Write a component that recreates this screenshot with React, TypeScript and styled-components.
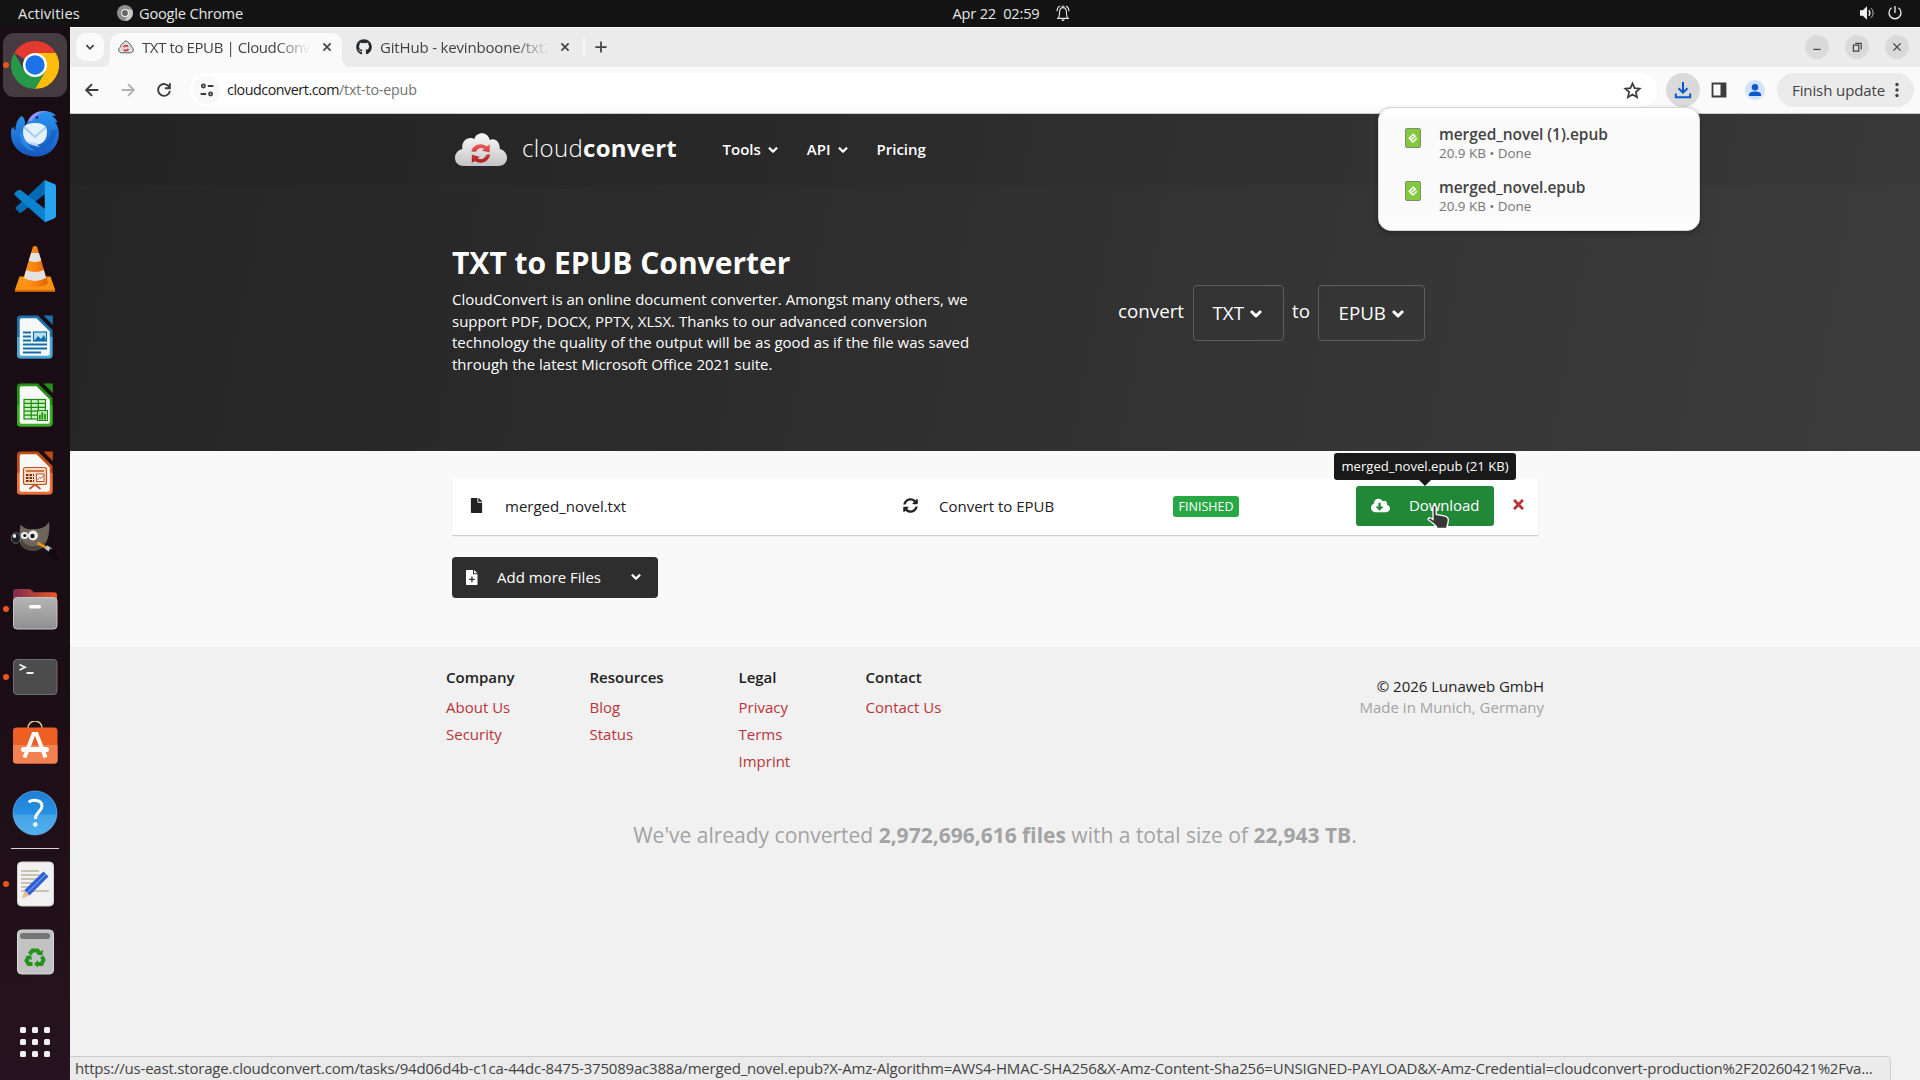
import React from "react";
import styled, { createGlobalStyle } from "styled-components";
import { FaChevronDown, FaCloudDownloadAlt, FaFile, FaGithub, FaSyncAlt, FaTimes } from "react-icons/fa";

const GlobalStyle = createGlobalStyle`
  * { box-sizing: border-box; }
  html, body { margin: 0; padding: 0; overflow: hidden; }
  body { font-family: "Open Sans", "Noto Sans", sans-serif; font-size: 15px; color: #212121; }
  svg { display: block; flex: none; }
`;

/* ---------- desktop ---------- */

const Desktop = styled.div`
  width: 1920px;
  height: 1080px;
  display: grid;
  grid-template: 27px minmax(0, 1fr) / 70px minmax(0, 1fr);
  overflow: hidden;
`;

const TopBar = styled.header`
  grid-column: 1 / 3;
  display: grid;
  grid-template-columns: 1fr auto 1fr;
  align-items: center;
  background: #131313;
  color: #e6e6e6;
  font-size: 14.67px;
  line-height: 25px;
  padding-bottom: 1px;
  white-space: pre;
`;

const TopGroup = styled.div<{ $gap: number; $end?: boolean }>`
  display: flex;
  align-items: center;
  gap: ${(p) => p.$gap}px;
  justify-content: ${(p) => (p.$end ? "flex-end" : "flex-start")};
  padding: 0 ${(p) => (p.$end ? 17 : 0)}px 0 ${(p) => (p.$end ? 0 : 18)}px;
`;

const AppMenu = styled.div`
  display: flex;
  align-items: center;
  gap: 6px;
`;

const Label = styled.span<{ $track?: number }>`
  letter-spacing: ${(p) => p.$track ?? 0}px;
  white-space: pre;
`;

const Clock = styled.div`
  display: flex;
  align-items: center;
  gap: 17px;
  padding-left: 103px;
`;

const Dock = styled.nav`
  display: flex;
  flex-direction: column;
  align-items: center;
  gap: 4px;
  padding-top: 6px;
  background: linear-gradient(165deg, #190c13 0%, #1b0d15 60%, #26131f 100%);
`;

const DockTile = styled.div<{ $active?: boolean }>`
  position: relative;
  width: 64px;
  height: 64px;
  flex: none;
  display: grid;
  place-items: center;
  border-radius: 11px;
  background: ${(p) => (p.$active ? "#453b41" : "transparent")};
`;

const RunningDot = styled.i`
  position: absolute;
  left: 0;
  top: 29px;
  width: 6px;
  height: 6px;
  border-radius: 50%;
  background: #e95420;
`;

const DockDivider = styled.hr`
  width: 48px;
  height: 1px;
  margin: -1px 0 -1px;
  border: 0;
  flex: none;
  background: #d8d5d7;
`;

const GridButton = styled.div`
  display: grid;
  grid-template-columns: repeat(3, 6px);
  gap: 6px;
  margin-top: 39px;
`;

const GridDot = styled.i`
  height: 6px;
  border-radius: 1.5px;
  background: #f2f2f2;
`;

/* ---------- browser chrome ---------- */

const Browser = styled.main`
  display: flex;
  flex-direction: column;
  min-width: 0;
  background: #f1f1f1;
  overflow: hidden;
  position: relative;
`;

const TabStrip = styled.div`
  display: flex;
  align-items: flex-end;
  height: 40px;
  flex: none;
  padding-left: 6px;
  background: #ebebeb;
  border-top: 1px solid #fbfbfb;
  color: #434343;
`;

const TabSearch = styled.div`
  width: 28px;
  height: 28px;
  margin: 0 6px 6px 0;
  display: grid;
  place-items: center;
  border-radius: 10px;
  background: #fafafa;
`;

const Tab = styled.div<{ $active?: boolean; $width: number }>`
  position: relative;
  width: ${(p) => p.$width}px;
  height: 34px;
  display: flex;
  align-items: center;
  padding: 0 9px 6px ${(p) => (p.$active ? 8 : 14)}px;
  border-radius: 10px 10px 0 0;
  background: ${(p) => (p.$active ? "#fafafa" : "transparent")};
  font-size: 15px;
  &::before,
  &::after {
    content: ${(p) => (p.$active ? '""' : "none")};
    position: absolute;
    bottom: 0;
    width: 8px;
    height: 8px;
  }
  &::before { left: -8px; background: radial-gradient(circle at 0 0, transparent 7.5px, #fafafa 8px); }
  &::after { right: -8px; background: radial-gradient(circle at 100% 0, transparent 7.5px, #fafafa 8px); }
`;

const TabTitle = styled.span<{ $track: number; $width: number }>`
  width: ${(p) => p.$width}px;
  margin: 0 11px 0 8px;
  padding-bottom: 1px;
  overflow: hidden;
  white-space: nowrap;
  line-height: 22px;
  letter-spacing: ${(p) => p.$track}px;
  mask-image: linear-gradient(90deg, #000 calc(100% - 34px), transparent);
`;

const TabSeparator = styled.i`
  width: 2px;
  height: 16px;
  margin: 0 9px 12px 3px;
  background: #f8f8f8;
`;

const NewTab = styled.div`
  height: 34px;
  display: grid;
  place-items: center;
  padding-bottom: 6px;
`;

const WindowButtons = styled.div`
  display: flex;
  gap: 16px;
  margin: 0 11px 8px auto;
`;

const WindowButton = styled.div`
  width: 24px;
  height: 24px;
  display: grid;
  place-items: center;
  border-radius: 50%;
  background: #dadada;
`;

const Toolbar = styled.div`
  display: flex;
  align-items: center;
  height: 47px;
  flex: none;
  padding: 0 6px 0 13px;
  background: #fafafa;
  border-bottom: 1px solid #c9c9c9;
  color: #3c3c3c;
`;

const NavButtons = styled.div`
  display: flex;
  gap: 18px;
  margin-right: 17px;
`;

const Omnibox = styled.div`
  display: flex;
  align-items: center;
  width: 1467px;
  height: 34px;
  padding: 0 15px 0 3px;
  border-radius: 17px;
  background: #fff;
  font-size: 14.3px;
`;

const SiteInfo = styled.div`
  width: 28px;
  height: 28px;
  margin-right: 6px;
  display: grid;
  place-items: center;
  border-radius: 50%;
  background: #f8f8f8;
`;

const Url = styled.div`
  flex: 1;
  color: #1b1b1b;
  line-height: 20px;
`;

const UrlPath = styled.span`
  color: #737373;
  letter-spacing: -0.2px;
`;

const DownloadsButton = styled.div`
  width: 34px;
  height: 34px;
  margin: 0 1px 0 9px;
  display: grid;
  place-items: center;
  border-radius: 50%;
  background: #dadada;
`;

const ToolbarSlot = styled.div`
  width: 36px;
  display: grid;
  place-items: center;
`;

const UpdatePill = styled.div`
  display: flex;
  align-items: center;
  justify-content: space-between;
  width: 137px;
  height: 34px;
  margin-left: auto;
  padding: 0 15px;
  border-radius: 17px;
  background: #ebebeb;
  color: #434343;
  line-height: 20px;
  span { padding-bottom: 1px; }
`;

const DownloadsPopup = styled.section`
  position: absolute;
  left: 1308px;
  top: 80px;
  width: 322px;
  height: 124px;
  padding: 9px 0;
  border: 1px solid #d8d8d8;
  border-radius: 13px;
  background: #fff;
  box-shadow: 0 2px 5px rgba(0, 0, 0, 0.3);
  z-index: 3;
`;

const DownloadEntry = styled.div`
  display: flex;
  gap: 17px;
  height: 53px;
  padding: 11px 0 0 25px;
  background: #fafafa;
`;

const DownloadName = styled.div`
  font-size: 15.5px;
  font-weight: 600;
  line-height: 20px;
  letter-spacing: -0.06px;
  color: #434343;
  margin-top: -4px;
`;

const DownloadMeta = styled.div`
  font-size: 13.4px;
  line-height: 18px;
  color: #777;
`;

/* ---------- page ---------- */

const Hero = styled.section`
  height: 337px;
  flex: none;
  background: linear-gradient(100deg, #252525 0%, #2d2d2d 40%, #333 60%, #3c3c3c 100%);
  color: #fff;
`;

const SiteNav = styled.div`
  height: 71px;
  padding-left: 385px;
  display: flex;
  align-items: center;
  background: rgba(0, 0, 0, 0.05);
`;

const Brand = styled.div`
  display: flex;
  align-items: center;
  width: 267.5px;
  font-size: 24px;
  line-height: 32px;
`;

const Wordmark = styled.span`
  margin-left: 15px;
  padding-bottom: 4px;
  font-weight: 300;
  letter-spacing: 0.35px;
  b { font-weight: 700; letter-spacing: 0.25px; }
`;

const NavItem = styled.div<{ $gap?: number }>`
  display: flex;
  align-items: center;
  gap: 7px;
  margin-right: ${(p) => p.$gap ?? 0}px;
  font-weight: 600;
  line-height: 20px;
  padding-bottom: 2px;
  svg { margin-top: 3px; }
`;

const HeroBody = styled.div`
  display: flex;
  padding-left: 382px;
`;

const Intro = styled.div`
  width: 543px;
  padding-top: 55px;
`;

const Title = styled.h1`
  margin: 0;
  font-size: 30px;
  font-weight: 700;
  line-height: 45px;
`;

const Lead = styled.p`
  margin: 4px 0 0;
  width: 530px;
  line-height: 21.7px;
`;

const FormatPicker = styled.div`
  display: flex;
  align-items: center;
  height: 56px;
  margin: 100px 0 0 123px;
  font-size: 18.75px;
`;

const PickerWord = styled.span`
  padding-bottom: 6px;
`;

const FormatSelect = styled.div<{ $width: number }>`
  display: flex;
  align-items: center;
  gap: 6px;
  width: ${(p) => p.$width}px;
  height: 56px;
  padding-left: 19px;
  margin: 0 8.5px 0 8.5px;
  padding-bottom: 2px;
  border: 1px solid #5e5e5e;
  border-radius: 4px;
  svg { margin-top: 3px; }
`;

const Workspace = styled.section`
  height: 196px;
  flex: none;
  padding: 27px 382px 0;
  background: #f9f9f9;
`;

const FileRow = styled.div`
  display: flex;
  align-items: center;
  height: 57px;
  padding-left: 17px;
  background: #fff;
  box-shadow: 0 1px 1px rgba(0, 0, 0, 0.17);
`;

const FileCell = styled.div<{ $width: number; $gap?: number }>`
  display: flex;
  align-items: center;
  gap: ${(p) => p.$gap ?? 0}px;
  width: ${(p) => p.$width}px;
  flex: none;
  padding-bottom: ${(p) => (p.$gap ? 2 : 0)}px;
`;

const StatusBadge = styled.span`
  height: 21px;
  width: 66px;
  text-align: center;
  border-radius: 3px;
  background: #28a745;
  color: #fff;
  font-size: 12.5px;
  line-height: 21px;
`;

const DownloadLink = styled.div`
  position: relative;
  display: flex;
  align-items: center;
  gap: 19px;
  width: 138px;
  height: 40px;
  margin-top: -1px;
  padding: 0 0 2px 15px;
  border-radius: 3px;
  background: #218838;
  color: #fff;
  letter-spacing: -0.1px;
`;

const Tooltip = styled.div`
  position: absolute;
  left: -22px;
  top: -33px;
  width: 182px;
  height: 27px;
  border-radius: 3px;
  background: #191919;
  font-size: 13.125px;
  line-height: 26px;
  text-align: center;
  letter-spacing: 0;
  white-space: nowrap;
  &::after {
    content: "";
    position: absolute;
    left: 85px;
    top: 27px;
    border: 6px solid transparent;
    border-top-color: #191919;
    border-bottom: 0;
  }
`;

const PointerCursor = styled.svg`
  position: absolute;
  left: 70px;
  top: 17px;
`;

const RemoveButton = styled.div`
  margin: -4px 0 0 16.5px;
  color: #bb3339;
`;

const AddButton = styled.div`
  display: flex;
  align-items: center;
  width: 206px;
  height: 41px;
  margin-top: 22px;
  padding: 0 0 1px 14px;
  border-radius: 4px;
  background: #2e2e2e;
  color: #fff;
  line-height: 20px;
`;

const AddLabel = styled.span`
  width: 134px;
  margin-left: 19px;
`;

const Footer = styled.footer`
  flex: 1;
  padding: 19px 376px 0;
  background: #f1f1f1;
`;

const FooterTop = styled.div`
  display: flex;
  height: 137px;
`;

const LinkColumn = styled.div<{ $width: number }>`
  width: ${(p) => p.$width}px;
  display: flex;
  flex-direction: column;
`;

const ColumnTitle = styled.strong`
  font-weight: 600;
  line-height: 22px;
  margin-bottom: 6px;
`;

const FooterLink = styled.a`
  color: #bb3339;
  line-height: 27px;
`;

const Copyright = styled.div`
  margin-left: auto;
  padding-top: 10px;
  text-align: right;
  line-height: 21.3px;
  span { color: #a3a3a3; }
`;

const Stats = styled.p`
  margin: 16px 0 0;
  text-align: center;
  font-size: 21px;
  line-height: 32px;
  color: #a3a3a3;
`;

const StatusBar = styled.div`
  position: absolute;
  left: 0;
  bottom: 0;
  width: 1821px;
  height: 24px;
  padding-left: 5px;
  border: 1px solid #cdcdcd;
  border-width: 1px 1px 0 0;
  border-radius: 0 5px 0 0;
  background: #ebebeb;
  color: #434343;
  font-size: 15px;
  line-height: 22px;
  letter-spacing: -0.2px;
  white-space: nowrap;
`;

/* ---------- icons ---------- */

const Chevron = ({ size = 10 }: { size?: number }) => <HeavyChevron size={size} />;

const HeavyChevron = styled(FaChevronDown)`
  overflow: visible;
  stroke: currentColor;
  stroke-width: 44;
`;

const Stroke = ({ d, size = 20, w = 2, color = "currentColor", fill = "none" }: { d: string; size?: number; w?: number; color?: string; fill?: string }) => (
  <svg width={size} height={size} viewBox="0 0 20 20" fill={fill} stroke={color} strokeWidth={w}>
    <path d={d} />
  </svg>
);

const ChromeMono = () => (
  <svg width="16" height="16" viewBox="0 0 16 16">
    <circle cx="8" cy="8" r="8" fill="#8e8e8e" />
    <path d="M8 4.5H15A8 8 0 0 1 8 16L11 9.8Z" fill="#c9c9c9" />
    <circle cx="8" cy="8" r="3.9" fill="#f0f0f0" />
    <circle cx="8" cy="8" r="2.9" fill="#666" />
  </svg>
);

const Bell = () => (
  <svg width="14" height="17" viewBox="0 0 14 17" fill="none" stroke="#e6e6e6" strokeWidth="1.1">
    <path d="M1 13.4H13M2.6 13C3.6 11 3.4 9 3.6 6.6C3.8 4 5 2.6 7 2.6S10.2 4 10.4 6.6C10.6 9 10.4 11 11.4 13M1 6.3C1 4 2 2 4 1M13 6.3C13 4 12 2 10 1M5.6 1.2H8.4" />
    <path d="M5.2 14.6H8.8L7.8 16H6.2Z" fill="#e6e6e6" stroke="none" />
  </svg>
);

const Volume = () => (
  <svg width="16" height="16" viewBox="0 0 16 16" fill="none" stroke="#efefef">
    <path d="M1 5.2H3.8L8 1.3V14.7L3.8 10.8H1Z" fill="#efefef" stroke="none" />
    <path d="M9.8 5.3C11.2 7 11.2 9 9.8 10.7" strokeWidth="1.4" />
    <path d="M12 3.2C14.8 6 14.8 10 12 12.8" strokeWidth="1" opacity=".8" />
  </svg>
);

const Power = () => (
  <svg width="16" height="16" viewBox="0 0 16 16" fill="none" stroke="#efefef" strokeWidth="1.3">
    <path d="M8 1V8M4.6 2.8A6 6 0 1 0 11.4 2.8" />
  </svg>
);

const CloudFavicon = () => (
  <svg width="16" height="14" viewBox="0 0 16 14">
    <path d="M3.5 12.8C1.5 12.8.7 11.3.7 9.8C.7 8.2 1.7 7.3 2.7 7C2.5 5 3.7 3.7 5.1 3.5C5.6 1.9 6.7 1 8 1S10.4 1.9 10.9 3.5C12.3 3.7 13.5 5 13.3 7C14.3 7.3 15.3 8.2 15.3 9.8C15.3 11.3 14.5 12.8 12.5 12.8Z" fill="#dedede" stroke="#5c5c5c" strokeWidth="1" />
    <path d="M5.6 7.3A2.6 2.6 0 0 1 10.2 6.7M10.4 8.9A2.6 2.6 0 0 1 5.8 9.5" fill="none" stroke="#d2383c" strokeWidth="1.7" />
  </svg>
);

const CloudLogo = () => (
  <svg width="52" height="35" viewBox="0 0 52 35">
    <defs>
      <linearGradient id="cloud" x2="0" y2="1"><stop stopColor="#fafafa" /><stop offset="1" stopColor="#c4c4c4" /></linearGradient>
      <linearGradient id="arrows" x2="0" y2="1"><stop stopColor="#ee5a57" /><stop offset="1" stopColor="#a91d22" /></linearGradient>
    </defs>
    <path d="M9 34C3.500 34 0 30.500 0 26C0 21.500 3 18 7.300 17C6.500 10 10.500 6.300 15.500 6C17 6 18.500 6.500 19.300 7C20.500 3.500 23.300 1.300 27 1.300S33.500 3.500 34.700 8C40 5.500 45 9.500 44.800 17C49.200 18 52 21.500 52 26C52 30.500 48.500 34 43 34Z" fill="url(#cloud)" />
    <path d="M16.300 19.500C17.300 14.800 21.600 12 26 12.200C28.500 12.400 30.200 13.200 31.400 14.400L34.800 12.600L34.600 20.400L26.800 18.600L29.400 17C26.500 14.800 22.500 16 21 19.800ZM35.300 22.500C34.300 27.500 30 30.900 25.500 30.700C23.200 30.500 21.500 29.900 20.300 28.900L16.800 30.700V22.600L25 25L22.600 26.200C25.500 28.300 30 27 31.300 22.700Z" fill="url(#arrows)" />
  </svg>
);

const EpubFile = () => (
  <svg width="18" height="20" viewBox="0 0 18 20">
    <rect x="1.500" y=".5" width="15" height="19" rx="1.500" fill="#84c93c" stroke="#7d8a70" />
    <path d="M7 11.500L11.300 8.300L9.300 6.200L5.200 10.200L9 14L12.800 10.300" fill="none" stroke="#fff" strokeWidth="1.500" />
  </svg>
);

const FilePlus = () => (
  <svg width="12" height="15" viewBox="0 0 12 15">
    <path fillRule="evenodd" d="M.7 0H7V4.200H11.500V14.300A.7.700 0 0 1 10.800 15H.7A.7.700 0 0 1 0 14.300V.7A.7.700 0 0 1 .7 0ZM5.300 6.500V8.700H3.100V10H5.300V12.200H6.600V10H8.800V8.700H6.600V6.500Z" fill="#fff" />
    <path d="M8 0L11.500 3.300H8Z" fill="#fff" />
  </svg>
);

const HandCursor = () => (
  <PointerCursor width="24" height="28" viewBox="0 0 24 28">
    <path d="M7.500 2.500C9 2 10.200 3 10.200 4.500V11.500L18 12.800C21 13.400 22.300 14.500 22.300 17C22.300 20 21.500 21.500 21 23V25.300H10.500V23.500C8 21.500 6 19 2.300 16.800C1.500 15.500 3 14.300 4.600 15L7 16.500V4C7 3.200 7 2.800 7.500 2.500Z" fill="#363636" stroke="#fff" strokeWidth="1.300" />
  </PointerCursor>
);

const Art = ({ children }: { children: React.ReactNode }) => (
  <svg width="48" height="48" viewBox="0 0 48 48">{children}</svg>
);

const ChromeIcon = () => (
  <Art>
    <path d="M24 24L3.200 12A24 24 0 0 1 44.800 12Z" fill="#e23a2e" />
    <path d="M24 12H44.800A24 24 0 0 1 24 48L34.400 30Z" fill="#fdbd0b" />
    <path d="M13.600 30L3.200 12A24 24 0 0 0 24 48L34.400 30Z" fill="#279847" />
    <circle cx="24" cy="24" r="12" fill="#fff" />
    <circle cx="24" cy="24" r="9.700" fill="#1a73e8" />
  </Art>
);

const ThunderbirdIcon = () => (
  <Art>
    <defs><linearGradient id="tb" x2="0" y2="1"><stop stopColor="#2b95f2" /><stop offset="1" stopColor="#1558c0" /></linearGradient></defs>
    <path d="M0 21C1 19 2 18 3 18C3 20 3.500 21 4.500 21C4.500 15 7 9 10.500 7C14 9 14.500 13 13.500 18L17 12C20 5 26 2 33 2C38 2 42 3.500 45 6.500L41 7C43.500 8.500 45.500 10.500 46.500 13.500L44 13C47 17 48 21 47.800 26C47 39 37 47.500 25 47.500C11 47.500 0 38 0 25Z" fill="url(#tb)" />
    <path d="M17 12C21 4.500 28 1 36 2.300C30 3 24 6 21 12Z" fill="#a98af0" />
    <path d="M9 23C8 33 14 42 24 42C16 36 14 30 16 24Z" fill="#3ba7fa" opacity=".45" />
    <path d="M46 20C46 31 38 39 26 39C35 36 40 31 40 22Z" fill="#0f55bd" opacity=".55" />
    <path d="M12 22C12 16 17 14 24 14S36 16 36 23C36 31 31 36 24 36S12 31 12 22Z" fill="#e3f1fc" />
    <path d="M13 18L24 28L35 18" stroke="#a5cbed" strokeWidth="1.800" fill="none" />
    <path d="M16 33C19 36 24 37 29 38C26 36 25 35 27 34Z" fill="#b8dcf9" />
    <circle cx="26" cy="8.500" r="1.300" fill="#12305f" />
  </Art>
);

const CodeIcon = () => (
  <Art>
    <path d="M33.500 3.200L34 17L10.500 35.400A2 2 0 0 1 8 35.300L5.500 32.700A2 2 0 0 1 5.600 29.600Z" fill="#0369b3" />
    <path d="M5.500 14.200L8 13A2 2 0 0 1 10 13.300L34 32V45.200L3.800 18.200A2 2 0 0 1 3.800 16Z" fill="#0a82cf" />
    <path d="M33.500 3L43.500 7Q45 7.700 45 9.200V39Q45 40.500 43.500 41.200L34 45.200Z" fill="#27a3f0" />
  </Art>
);

const VlcIcon = () => (
  <Art>
    <defs><linearGradient id="vlc"><stop stopColor="#ff9a1c" /><stop offset=".5" stopColor="#f98310" /><stop offset="1" stopColor="#dd6104" /></linearGradient></defs>
    <path d="M8.500 31.500H39.500L44 44.500V46.500H4V44.500Z" fill="#ff9212" />
    <path d="M4 44.800H44V46.600H4Z" fill="#e06c05" />
    <path d="M22 1.500Q24 .3 26 1.500L37 38C33 43 15 43 11 38Z" fill="url(#vlc)" />
    <path d="M20.200 8H27.800L30.300 15.500Q24 18.500 17.700 15.500ZM15.200 25Q24 29 32.800 25L35 33Q24 39 13 33Z" fill="#e2e2e2" />
  </Art>
);

const OfficePage = ({ dark, light, children }: { dark: string; light: string; children: React.ReactNode }) => (
  <Art>
    <path d="M9.500 2.500H27L41.500 17V42A3.500 3.500 0 0 1 38 45.500H9.500A3.500 3.500 0 0 1 6 42V6A3.500 3.500 0 0 1 9.500 2.500Z" fill={dark} />
    <path d="M6 24H41.500V42A3.500 3.500 0 0 1 38 45.500H9.500A3.500 3.500 0 0 1 6 42Z" fill={light} />
    <path d="M10.500 5.200H25.500L38.800 18.500V41A1.800 1.800 0 0 1 37 42.800H10.500A1.800 1.800 0 0 1 8.700 41V7A1.800 1.800 0 0 1 10.500 5.200Z" fill="#f8f8f8" />
    <path d="M32.500 2.500H41.800V12Z" fill={dark} />
    {children}
  </Art>
);

const WriterIcon = () => (
  <OfficePage dark="#1c71a8" light="#4aa6d3">
    <path d="M12 19.500H20M12 23.500H20M12 27.500H20M12 31.500H36M12 35.500H36M12 39.500H30" stroke="#0d70a8" strokeWidth="1.800" />
    <rect x="22.500" y="19" width="13" height="9" fill="#b8e0f4" stroke="#0d70a8" strokeWidth="1.200" />
    <path d="M23 28L27 23L30 26L33 22L35.500 28Z" fill="#0d70a8" />
  </OfficePage>
);

const CalcIcon = () => (
  <OfficePage dark="#239112" light="#3dab25">
    <rect x="13" y="18.500" width="21.500" height="19.500" fill="#c9f2c0" stroke="#1d8a10" strokeWidth="1.200" />
    <path d="M13 22.400H34.500M13 26.300H34.500M13 30.200H34.500M13 34.100H34.500M20.200 18.500V38M27.300 18.500V38" stroke="#1d8a10" strokeWidth="1.200" />
    <rect x="26.500" y="29.500" width="10" height="10" fill="#b2e8a6" stroke="#1d8a10" />
    <path d="M28.800 38.500V34M31.300 38.500V31.500M34 38.500V33" stroke="#1d8a10" strokeWidth="1.700" />
  </OfficePage>
);

const ImpressIcon = () => (
  <OfficePage dark="#c04c10" light="#ec7136">
    <rect x="12.500" y="18.500" width="23" height="17" rx="2" fill="#fbd9c5" stroke="#bd5420" strokeWidth="1.200" />
    <path d="M15 22H33M24 35.500L18.500 40M24 35.500L29.500 40" stroke="#bd5420" strokeWidth="1.700" />
    <path d="M15 26H23M15 29H23M15 32H23" stroke="#7e2f08" strokeWidth="1.800" strokeDasharray="2.500 1" />
    <rect x="25.500" y="25" width="7.500" height="7.500" fill="#fff" stroke="#bd5420" />
    <path d="M26.500 31L28.500 28.500L30 29.500L32.500 26.500" stroke="#bd5420" fill="none" />
  </OfficePage>
);

const GimpIcon = () => (
  <Art>
    <g transform="translate(0 1.500)">
    <path d="M9.500 6C14 11 18 11 22 10.500C30 10.500 35 9 38 3C39 10 38 20 33.500 27C29 33 17 34 11 28C7.500 24 8.500 14 9.500 6Z" fill="#6e665b" />
    <path d="M10 20C14 29 27 31 36 22C33 32 24 34.500 15 31C11 29 9.500 25 10 20Z" fill="#4b453d" />
    <ellipse cx="4.800" cy="19.500" rx="4.600" ry="5.400" fill="#1b1f22" stroke="#89a" strokeWidth=".6" />
    <ellipse cx="3.500" cy="17.500" rx="1.700" ry="2" fill="#e8eef0" />
    <circle cx="13.500" cy="17" r="3.600" fill="#eee" /><circle cx="22" cy="17" r="4.900" fill="#eee" />
    <circle cx="13.800" cy="17" r="1.600" fill="#191919" /><circle cx="21.500" cy="17.500" r="2.200" fill="#191919" />
    <path d="M26.500 24.500L36 29.500" stroke="#e8921e" strokeWidth="2.600" />
    <path d="M35 28.500L40 32" stroke="#b7c4cc" strokeWidth="4.500" />
    <path d="M39 30C44 31 45.500 36 46.500 41C42 40 38 37 37.500 34Z" fill="#0b0b0b" />
    </g>
  </Art>
);

const FilesIcon = () => (
  <Art>
    <defs>
      <linearGradient id="folder"><stop stopColor="#7c2a55" /><stop offset="1" stopColor="#ee5a24" /></linearGradient>
      <linearGradient id="drawer" x2="0" y2="1"><stop stopColor="#b4b4b4" /><stop offset="1" stopColor="#8f8f8f" /></linearGradient>
    </defs>
    <path d="M5 4H19L23 7.200H43A3 3 0 0 1 46 10V18H2V7A3 3 0 0 1 5 4Z" fill="url(#folder)" />
    <rect x="2.500" y="12.500" width="43.500" height="31.500" rx="3.500" fill="url(#drawer)" stroke="#c4c4c4" />
    <rect x="18" y="20" width="12" height="3.500" rx="1.500" fill="#fafafa" />
  </Art>
);

const TerminalIcon = () => (
  <Art>
    <rect x="2.500" y="6.500" width="43.500" height="35" rx="3.500" fill="#4c4c4c" stroke="#6f6f6f" />
    <path d="M8.500 11.500L14 14.300L8.500 17M15.500 20H22.500" fill="none" stroke="#f2f2f2" strokeWidth="1.800" />
  </Art>
);

const SoftwareIcon = () => (
  <Art>
    <path d="M17 9V7A7 7 0 0 1 31 7V9" fill="none" stroke="#eccb8f" strokeWidth="1.500" />
    <rect x="2" y="6.500" width="44.500" height="36" rx="3.500" fill="#ee5f26" />
    <path d="M2 24H46.500V39A3.500 3.500 0 0 1 43 42.500H5.500A3.500 3.500 0 0 1 2 39Z" fill="#f38152" />
    <path d="M13.500 36.500L22.500 13H25.500L34.500 36.500" fill="none" stroke="#fff" strokeWidth="4" />
    <rect x="10" y="26" width="28" height="5" rx="2.500" fill="#fff" />
  </Art>
);

const HelpIcon = () => (
  <Art>
    <defs><linearGradient id="help" x2="0" y2="1"><stop stopColor="#1e7fd6" /><stop offset=".53" stopColor="#2591e2" /><stop offset=".54" stopColor="#43a3e6" /><stop offset="1" stopColor="#51b0ec" /></linearGradient></defs>
    <circle cx="24" cy="24" r="22" fill="url(#help)" stroke="#79bdf0" strokeWidth=".6" />
    <path d="M18 13.500C20 10.500 31 10 31 17C31 23 24.500 22.500 24.500 30" fill="none" stroke="#fff" strokeWidth="3" />
    <circle cx="24.300" cy="35.500" r="2.300" fill="#fff" />
  </Art>
);

const EditorIcon = () => (
  <Art>
    <rect x="6.500" y="2" width="36" height="44" rx="4" fill="#f1f1f1" stroke="#d0d0d0" />
    <path d="M10 11H28M10 15H30M10 19H26M10 23H24M10 27H22M10 31H38" stroke="#c9c3b3" strokeWidth="1.800" />
    <path d="M11 38.500L13.500 30.500L18 35.500Z" fill="#e7bd86" />
    <path d="M13.500 30L32.500 11.500L37.500 16.500L18.500 35.500Z" fill="#2d5fd2" />
    <path d="M16 33L35 14" stroke="#6491ee" strokeWidth="1.500" />
  </Art>
);

const TrashIcon = () => (
  <Art>
    <rect x="6.500" y="2" width="36" height="44" rx="4" fill="#c2c2c2" stroke="#dadada" />
    <rect x="9" y="5" width="30" height="6" rx="3" fill="#757575" />
    <g fill="none" stroke="#23931c" strokeWidth="4">
      <path d="M18.500 26L21.500 22.500H26.500L29 26" /><path d="M31 28.500L32.500 32L30.500 36H26" /><path d="M21.500 36H17.500L15.500 32.500L18 28.500" />
    </g>
    <path d="M26 26.500L31.500 27.500L32 21.500ZM27 32V39.500L23 36ZM14 28.500L20 27L21 32Z" fill="#23931c" />
  </Art>
);

/* ---------- data ---------- */

type DockItem = { icon: React.ReactNode; active?: boolean; running?: boolean };

const apps: DockItem[] = [
  { icon: <ChromeIcon />, active: true, running: true },
  { icon: <ThunderbirdIcon /> },
  { icon: <CodeIcon /> },
  { icon: <VlcIcon /> },
  { icon: <WriterIcon /> },
  { icon: <CalcIcon /> },
  { icon: <ImpressIcon /> },
  { icon: <GimpIcon /> },
  { icon: <FilesIcon />, running: true },
  { icon: <TerminalIcon />, running: true },
  { icon: <SoftwareIcon /> },
  { icon: <HelpIcon /> },
];
const extras: DockItem[] = [{ icon: <EditorIcon />, running: true }, { icon: <TrashIcon /> }];

const columns = [
  { title: "Company", width: 143.5, links: ["About Us", "Security"] },
  { title: "Resources", width: 149, links: ["Blog", "Status"] },
  { title: "Legal", width: 127, links: ["Privacy", "Terms", "Imprint"] },
  { title: "Contact", width: 120, links: ["Contact Us"] },
];

const downloads = ["merged_novel (1).epub", "merged_novel.epub"];

const hoveredUrl =
  "https://us-east.storage.cloudconvert.com/tasks/94d06d4b-c1ca-44dc-8475-375089ac388a/merged_novel.epub?X-Amz-Algorithm=AWS4-HMAC-SHA256&X-Amz-Content-Sha256=UNSIGNED-PAYLOAD&X-Amz-Credential=cloudconvert-production%2F20260421%2Fva...";

const closePath = "M4 4L16 16M16 4L4 16";

const renderTile = (item: DockItem, i: number) => (
  <DockTile key={i} $active={item.active}>
    {item.running && <RunningDot />}
    {item.icon}
  </DockTile>
);

export default function App() {
  return (
    <Desktop>
      <GlobalStyle />
      <TopBar>
        <TopGroup $gap={37}>
          <Label $track={0.16}>Activities</Label>
          <AppMenu>
            <ChromeMono />
            <Label $track={-0.22}>Google Chrome</Label>
          </AppMenu>
        </TopGroup>
        <Clock>
          <Label $track={-0.22}>Apr 22  02:59</Label>
          <Bell />
        </Clock>
        <TopGroup $gap={12} $end>
          <Volume />
          <Power />
        </TopGroup>
      </TopBar>

      <Dock>
        {apps.map(renderTile)}
        <DockDivider />
        {extras.map(renderTile)}
        <GridButton>
          {Array.from({ length: 9 }, (_, i) => <GridDot key={i} />)}
        </GridButton>
      </Dock>

      <Browser>
        <TabStrip>
          <TabSearch>
            <Stroke size={12} w={3} d="M4 7L10 13L16 7" />
          </TabSearch>
          <Tab $active $width={232}>
            <CloudFavicon />
            <TabTitle $track={-0.4} $width={168}>TXT to EPUB | CloudConvert</TabTitle>
            <Stroke size={12} w={2.8} d={closePath} />
          </Tab>
          <Tab $width={238}>
            <FaGithub size={16} color="#24292f" />
            <TabTitle $track={-0.17} $width={169}>GitHub - kevinboone/txt2epub</TabTitle>
            <Stroke size={12} w={2.8} d={closePath} />
          </Tab>
          <TabSeparator />
          <NewTab><Stroke size={14} w={2.5} d="M10 2V18M2 10H18" /></NewTab>
          <WindowButtons>
            <WindowButton><Stroke size={12} w={2} d="M4 14H16" /></WindowButton>
            <WindowButton><Stroke size={12} w={2} d="M4 7H13V17H4ZM7 4H17V14" /></WindowButton>
            <WindowButton><Stroke size={12} w={2.2} d={closePath} /></WindowButton>
          </WindowButtons>
        </TabStrip>

        <Toolbar>
          <NavButtons>
            <Stroke size={18} w={2.1} d="M17 10H3.5M10 3.5L3.5 10L10 16.5" />
            <Stroke size={18} w={2.1} color="#b0b0b0" d="M3 10H16.5M10 3.5L16.5 10L10 16.5" />
            <Stroke size={18} w={2.1} d="M16 7A6.6 6.6 0 1 0 16.6 11M16.5 2.5V8H11" />
          </NavButtons>
          <Omnibox>
            <SiteInfo>
              <Stroke size={16} w={2.2} d="M2 15H9M11 5H18M7.500 5A2 2 0 1 1 3.500 5A2 2 0 1 1 7.500 5ZM16.500 15A2 2 0 1 1 12.500 15A2 2 0 1 1 16.500 15Z" />
            </SiteInfo>
            <Url>
              <Label $track={-0.46}>cloudconvert.com</Label>
              <UrlPath>/txt-to-epub</UrlPath>
            </Url>
            <Stroke size={19} w={1.8} d="M10 2.5L12.2 7.5L17.6 8L13.5 11.6L14.8 17L10 14.1L5.2 17L6.5 11.6L2.4 8L7.8 7.5Z" />
          </Omnibox>
          <DownloadsButton>
            <Stroke size={18} w={2.2} color="#0b57d0" d="M10 1V12M5 8L10 13L15 8M2 14V18H18V14" />
          </DownloadsButton>
          <ToolbarSlot>
            <svg width="16" height="16" viewBox="0 0 16 16"><path d="M1.500 1.500H14.500V14.500H1.500Z" fill="none" stroke="#3c3c3c" strokeWidth="1.800" /><path d="M9.500 1.500H15V14.500H9.500Z" fill="#3c3c3c" /></svg>
          </ToolbarSlot>
          <ToolbarSlot>
            <svg width="20" height="20" viewBox="0 0 20 20"><circle cx="10" cy="10" r="10" fill="#d3e3fd" /><circle cx="10" cy="7.200" r="3.200" fill="#0b57d0" /><path d="M4 16V14.500C4 12 8 11.500 10 11.500S16 12 16 14.500V16Z" fill="#0b57d0" /></svg>
          </ToolbarSlot>
          <UpdatePill>
            <Label $track={-0.1}>Finish update</Label>
            <svg width="4" height="16" viewBox="0 0 4 16" fill="#434343"><circle cx="2" cy="2.500" r="1.700" /><circle cx="2" cy="8" r="1.700" /><circle cx="2" cy="13.500" r="1.700" /></svg>
          </UpdatePill>
        </Toolbar>

        <DownloadsPopup>
          {downloads.map((name) => (
            <DownloadEntry key={name}>
              <EpubFile />
              <div>
                <DownloadName>{name}</DownloadName>
                <DownloadMeta>20.9 KB • Done</DownloadMeta>
              </div>
            </DownloadEntry>
          ))}
        </DownloadsPopup>

        <Hero>
          <SiteNav>
            <Brand>
              <CloudLogo />
              <Wordmark>cloud<b>convert</b></Wordmark>
            </Brand>
            <NavItem $gap={29}>Tools <Chevron /></NavItem>
            <NavItem $gap={29}>API <Chevron /></NavItem>
            <NavItem>Pricing</NavItem>
          </SiteNav>
          <HeroBody>
            <Intro>
              <Title>TXT to EPUB Converter</Title>
              <Lead>
                CloudConvert is an online document converter. Amongst many others, we support PDF, DOCX, PPTX, XLSX. Thanks to our advanced conversion technology the quality of the output will be as good as if the file was saved through the latest Microsoft Office 2021 suite.
              </Lead>
            </Intro>
            <FormatPicker>
              <PickerWord>convert</PickerWord>
              <FormatSelect $width={91}>TXT <Chevron size={12} /></FormatSelect>
              <PickerWord>to</PickerWord>
              <FormatSelect $width={107}>EPUB <Chevron size={12} /></FormatSelect>
            </FormatPicker>
          </HeroBody>
        </Hero>

        <Workspace>
          <FileRow>
            <FileCell $width={434} $gap={21}><FaFile size={15} color="#212121" /> merged_novel.txt</FileCell>
            <FileCell $width={270} $gap={21}><FaSyncAlt size={15} color="#212121" /> Convert to EPUB</FileCell>
            <FileCell $width={183}><StatusBadge>FINISHED</StatusBadge></FileCell>
            <DownloadLink>
              <FaCloudDownloadAlt size={19} />
              Download
              <Tooltip>merged_novel.epub (21 KB)</Tooltip>
              <HandCursor />
            </DownloadLink>
            <RemoveButton><FaTimes size={15} /></RemoveButton>
          </FileRow>
          <AddButton>
            <FilePlus />
            <AddLabel>Add more Files</AddLabel>
            <Chevron />
          </AddButton>
        </Workspace>

        <Footer>
          <FooterTop>
            {columns.map((c) => (
              <LinkColumn key={c.title} $width={c.width}>
                <ColumnTitle>{c.title}</ColumnTitle>
                {c.links.map((l) => <FooterLink key={l}>{l}</FooterLink>)}
              </LinkColumn>
            ))}
            <Copyright>
              © 2026 Lunaweb GmbH
              <br />
              <span>Made in Munich, Germany</span>
            </Copyright>
          </FooterTop>
          <Stats>
            We've already converted <b>2,972,696,616 files</b> with a total size of <b>22,943 TB</b>.
          </Stats>
        </Footer>

        <StatusBar>{hoveredUrl}</StatusBar>
      </Browser>
    </Desktop>
  );
}
